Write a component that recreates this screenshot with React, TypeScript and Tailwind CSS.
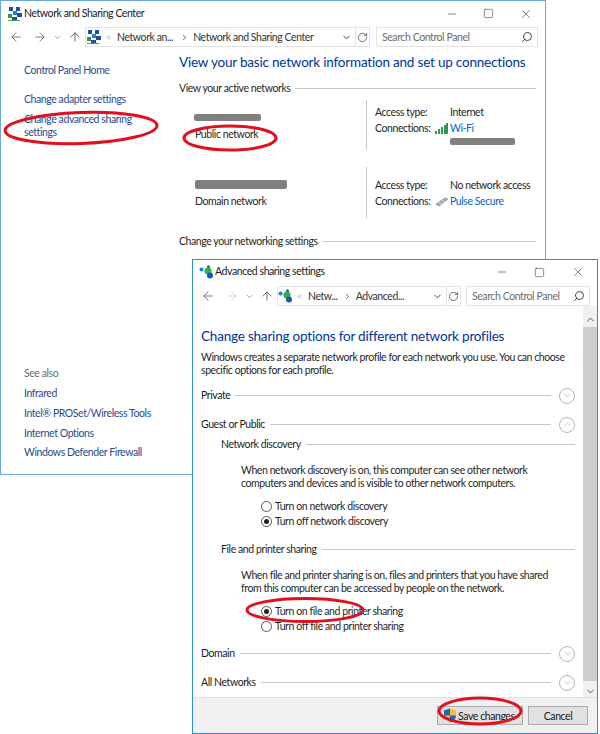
// Two overlapping Windows Control Panel dialogs with red hand-drawn ellipses on top.
import type { ReactNode } from 'react';
import { ArrowLeft, ArrowRight, ArrowUp, ChevronDown, ChevronUp, ChevronRight, ChevronsLeft, RotateCw, Search, Minus, Square, X } from 'lucide-react';

function NetIcon() {
  return (
    <svg width="16" height="16" viewBox="0 0 16 16" className="shrink-0">
      <rect x="2" y="1" width="4" height="4" fill="#1c4fa8" />
      <rect x="9" y="1" width="4" height="4" fill="#1c4fa8" />
      <rect x="6" y="5" width="4" height="4" fill="#2e7bd0" />
      <rect x="1" y="8" width="4" height="4" fill="#2a9a3c" />
      <rect x="10" y="7" width="5" height="4" fill="#1c4fa8" />
      <rect x="5" y="11" width="5" height="4" fill="#1c4fa8" />
      <rect x="1" y="14" width="12" height="1" fill="#46b04f" />
    </svg>
  );
}

function SharingIcon() {
  return (
    <svg width="15" height="14" viewBox="0 0 15 14" className="shrink-0">
      <circle cx="2.5" cy="4.5" r="2" fill="#1f7fd0" />
      <circle cx="9.5" cy="1.8" r="1.6" fill="#1f63b8" />
      <circle cx="9" cy="6" r="3.6" fill="#2fb24a" />
      <circle cx="11" cy="10.5" r="3" fill="#1559b0" />
    </svg>
  );
}

function WifiBars() {
  return (
    <svg width="13" height="11" viewBox="0 0 13 11" className="shrink-0">
      <rect x="0" y="8" width="2" height="3" fill="#2f9a52" />
      <rect x="3" y="6" width="2" height="5" fill="#2f9a52" />
      <rect x="6" y="4" width="2" height="7" fill="#2f9a52" />
      <rect x="9" y="2" width="2" height="9" fill="#2f9a52" />
      <rect x="11" y="0" width="2" height="11" fill="#2f9a52" />
    </svg>
  );
}

function PipeIcon() {
  return (
    <svg width="14" height="10" viewBox="0 0 14 10" className="shrink-0">
      <path d="M1 7 L10 1 L13 2 L4 9 Z" fill="#9fb1bf" stroke="#7f8f9c" strokeWidth="0.7" />
      <path d="M4 5 L6 7 M7 3 L9 5" stroke="#e8eef2" strokeWidth="0.8" />
    </svg>
  );
}

function Shield() {
  return (
    <svg width="14" height="15" viewBox="0 0 13 15" className="shrink-0">
      <path d="M6.5 0.5 L12.5 2.5 V7.5 C12.5 11 9.5 13.5 6.5 14.5 C3.5 13.5 0.5 11 0.5 7.5 V2.5 Z" fill="#f4c32c" />
      <path d="M6.5 0.5 V7.5 H0.5 V2.5 Z" fill="#1f63c0" />
      <path d="M6.5 7.5 H12.5 C12.5 11 9.5 13.5 6.5 14.5 Z" fill="#1f63c0" />
    </svg>
  );
}

function Blob({ w, h, className = '' }: { w: string; h: string; className?: string }) {
  return <div className={`${w} ${h} ${className} rounded-[2px] bg-[#808080]`} />;
}

function Caption({ title, icon, maxGap, pad }: { title: string; icon: ReactNode; maxGap: string; pad: string }) {
  return (
    <div className={`flex h-[26px] shrink-0 items-center ${pad} pl-[6px] text-[#1a1a1a]`}>
      {icon}
      <span className="ml-[1px]">{title}</span>
      <div className={`ml-auto flex items-center ${maxGap} pr-[12px] text-[#333]`}>
        <Minus size={12} strokeWidth={1.2} />
        <Square size={11} strokeWidth={1.2} />
        <X size={14} strokeWidth={1} />
      </div>
    </div>
  );
}

function SearchBox() {
  return (
    <div className="flex h-[20px] flex-1 items-center justify-between border border-[#e3e3e3] pl-[5px] pr-[4px] pt-[2px] text-[#6d6d6d]">
      <span>Search Control Panel</span>
      <Search size={12} strokeWidth={2} className="-translate-y-px -scale-x-100 text-[#444]" />
    </div>
  );
}

function SectionLine({ label }: { label: string }) {
  return (
    <div className="flex items-center gap-[5px]">
      <span>{label}</span>
      <div className="h-px flex-1 bg-[#c8c8c8]" />
    </div>
  );
}

function Profile({ label, open = false }: { label: string; open?: boolean }) {
  return (
    <div className="flex h-[17px] items-center gap-[5px]">
      <span className="text-[#1a1a1a]">{label}</span>
      <div className="h-px flex-1 bg-[#c8c8c8]" />
      <div className="ml-[3px] flex h-[16px] w-[16px] items-center justify-center rounded-full border border-[#b5b5b5] text-[#8a8a8a]">
        {open ? <ChevronUp size={11} strokeWidth={1} /> : <ChevronDown size={11} strokeWidth={1} />}
      </div>
    </div>
  );
}

function Radio({ label, on = false }: { label: string; on?: boolean }) {
  return (
    <div className="flex h-[15px] items-center gap-[3px]">
      <div className="flex h-[11px] w-[11px] items-center justify-center rounded-full border border-[#555] bg-white">
        {on && <div className="h-[5px] w-[5px] rounded-full bg-[#222]" />}
      </div>
      <span>{label}</span>
    </div>
  );
}

function SideLink({ children, className = '' }: { children: ReactNode; className?: string }) {
  return <div className={`leading-[13px] text-[#2a4a8c] ${className}`}>{children}</div>;
}

function Networks() {
  return (
    <div className="absolute left-0 top-0 flex h-[475px] w-[546px] flex-col overflow-hidden border border-[#6ba8dc] bg-white">
      <Caption title="Network and Sharing Center" maxGap="gap-[25px]" pad="pb-[1px]" icon={<NetIcon />} />

      {/* Navigation row */}
      <div className="flex h-[20px] shrink-0 items-center pr-[7px] text-[#555]">
        <ArrowLeft size={14} strokeWidth={1.3} className="ml-[8px]" />
        <ArrowRight size={14} strokeWidth={1.3} className="ml-[10px]" />
        <ChevronDown size={9} strokeWidth={1.5} className="ml-[6px]" />
        <ArrowUp size={14} strokeWidth={1.5} className="ml-[6px]" />
        <div className="ml-[3px] flex h-[20px] w-[285px] items-center border border-[#e3e3e3] text-[#333]">
          <NetIcon />
          <ChevronsLeft size={7} className="ml-[3px] text-[#888]" />
          <span className="ml-[5px] pt-[2px]">Network an...</span>
          <ChevronRight size={9} strokeWidth={2} className="ml-[7px]" />
          <span className="ml-[4px] pt-[2px]">Network and Sharing Center</span>
          <ChevronDown size={11} strokeWidth={2} className="ml-auto mr-[3px]" />
          <div className="flex h-full w-[14px] items-center justify-center border-l border-[#e3e3e3]">
            <RotateCw size={11} strokeWidth={1.5} />
          </div>
        </div>
        <div className="ml-[6px] flex flex-1">
          <SearchBox />
        </div>
      </div>

      <div className="flex min-h-0 flex-1">
        {/* Task pane */}
        <div className="flex w-[178px] shrink-0 flex-col pl-[23px]">
          <SideLink className="mt-[17px]">Control Panel Home</SideLink>
          <SideLink className="mt-[16px]">Change adapter settings</SideLink>
          <SideLink className="mt-[7px]">
            Change advanced sharing
            <br />
            settings
          </SideLink>
          <div className="mt-[228px] leading-[13px] text-[#6d6d6d]">See also</div>
          <div className="mt-[7px] flex flex-col gap-[7px]">
            <SideLink>Infrared</SideLink>
            <SideLink>Intel® PROSet/Wireless Tools</SideLink>
            <SideLink>Internet Options</SideLink>
            <SideLink className="-mt-px">Windows Defender Firewall</SideLink>
          </div>
        </div>

        {/* Main pane */}
        <div className="flex min-w-0 flex-1 flex-col pr-[9px]">
          <h1 className="mt-[5px] text-[13.5px] font-normal leading-[20px] tracking-[-0.2px] text-[#003399]">
            View your basic network information and set up connections
          </h1>
          <div className="mt-[10px] leading-[13px]">
            <SectionLine label="View your active networks" />
          </div>

          <div className="mt-[5px] flex h-[50px]">
            <div className="w-[187px] shrink-0 pl-[15px]">
              <Blob w="w-[67px]" h="h-[7px]" className="mt-[14px]" />
              <div className="ml-[1px] mt-[7px] leading-[13px]">Public network</div>
            </div>
            <div className="w-px shrink-0 bg-[#c8c8c8]" />
            <div className="pl-[8px] pt-[6px]">
              <div className="flex h-[13px] items-center">
                <span className="w-[75px]">Access type:</span>
                <span>Internet</span>
              </div>
              <div className="mt-[3px] flex h-[13px] items-center">
                <span className="w-[60px]">Connections:</span>
                <WifiBars />
                <span className="ml-[2px] text-[#0066cc]">Wi-Fi</span>
              </div>
              <Blob w="w-[65px]" h="h-[7px]" className="ml-[75px] mt-[3px]" />
            </div>
          </div>

          <div className="mt-[17px] flex h-[51px]">
            <div className="w-[187px] shrink-0 pl-[16px]">
              <Blob w="w-[92px]" h="h-[9px]" className="mt-[13px]" />
              <div className="mt-[6px] leading-[13px]">Domain network</div>
            </div>
            <div className="w-px shrink-0 bg-[#c8c8c8]" />
            <div className="pl-[8px] pt-[12px]">
              <div className="flex h-[13px] items-center">
                <span className="w-[75px]">Access type:</span>
                <span>No network access</span>
              </div>
              <div className="mt-[3px] flex h-[13px] items-center">
                <span className="w-[60px]">Connections:</span>
                <PipeIcon />
                <span className="ml-[1px] text-[#0066cc]">Pulse Secure</span>
              </div>
            </div>
          </div>

          <div className="mt-[17px] leading-[13px]">
            <SectionLine label="Change your networking settings" />
          </div>
        </div>
      </div>
    </div>
  );
}

function AdvancedSharing() {
  return (
    <div className="absolute left-[192px] top-[259px] flex h-[475px] w-[406px] flex-col overflow-hidden border border-[#2d8fd9] bg-white">
      <Caption title="Advanced sharing settings" maxGap="gap-[26px]" pad="pb-[2px]" icon={<SharingIcon />} />

      {/* Navigation row */}
      <div className="flex h-[20px] shrink-0 items-center pr-[7px] text-[#555]">
        <ArrowLeft size={14} strokeWidth={1.3} className="ml-[8px]" />
        <ArrowRight size={14} strokeWidth={1.3} className="ml-[10px] text-[#c4c4c4]" />
        <ChevronDown size={9} strokeWidth={1.5} className="ml-[6px]" />
        <ArrowUp size={14} strokeWidth={1.5} className="ml-[6px]" />
        <div className="ml-[3px] flex h-[20px] w-[184px] items-center border border-[#e3e3e3] text-[#333]">
          <SharingIcon />
          <ChevronsLeft size={7} className="ml-[3px] text-[#888]" />
          <span className="ml-[5px] pt-[2px]">Netw...</span>
          <ChevronRight size={9} strokeWidth={2} className="ml-[5px]" />
          <span className="ml-[4px] pt-[2px]">Advanced...</span>
          <ChevronDown size={11} strokeWidth={2} className="ml-auto mr-[3px]" />
          <div className="flex h-full w-[14px] items-center justify-center border-l border-[#e3e3e3]">
            <RotateCw size={11} strokeWidth={1.5} />
          </div>
        </div>
        <div className="ml-[5px] flex flex-1">
          <SearchBox />
        </div>
      </div>

      <div className="flex min-h-0 flex-1">
        <div className="flex min-w-0 flex-1 flex-col pl-[8px] pr-[8px]">
          <h2 className="mt-[20px] text-[13.5px] font-normal leading-[20px] tracking-[-0.2px] text-[#003399]">
            Change sharing options for different network profiles
          </h2>
          <p className="mt-[5px] leading-[13px]">
            Windows creates a separate network profile for each network you use. You can choose
            <br />
            specific options for each profile.
          </p>
          <div className="mt-[10px]">
            <Profile label="Private" />
          </div>
          <div className="mt-[12px]">
            <Profile label="Guest or Public" open />
          </div>

          <div className="ml-[20px] mt-[5px] leading-[13px]">
            <SectionLine label="Network discovery" />
            <p className="ml-[20px] mt-[13px]">
              When network discovery is on, this computer can see other network
              <br />
              computers and devices and is visible to other network computers.
            </p>
            <div className="ml-[40px] mt-[9px]">
              <Radio label="Turn on network discovery" />
              <Radio label="Turn off network discovery" on />
            </div>
            <div className="mt-[14px]">
              <SectionLine label="File and printer sharing" />
            </div>
            <p className="ml-[20px] mt-[13px]">
              When file and printer sharing is on, files and printers that you have shared
              <br />
              from this computer can be accessed by people on the network.
            </p>
            <div className="ml-[40px] mt-[9px]">
              <Radio label="Turn on file and printer sharing" on />
              <Radio label="Turn off file and printer sharing" />
            </div>
          </div>

          <div className="mt-[11px]">
            <Profile label="Domain" />
          </div>
          <div className="mt-[12px]">
            <Profile label="All Networks" />
          </div>
        </div>

        {/* Scrollbar */}
        <div className="flex w-[14px] shrink-0 flex-col items-center bg-[#f0f0f0] pt-[8px] text-[#444]">
          <ChevronUp size={11} strokeWidth={2} className="shrink-0" />
          <div className="mt-[2px] h-[356px] w-full bg-[#cdcdcd]" />
          <ChevronDown size={11} strokeWidth={2} className="mt-[5px] shrink-0" />
        </div>
      </div>

      {/* Button strip */}
      <div className="flex h-[36px] shrink-0 items-center justify-end gap-[5px] border-t border-[#dfdfdf] bg-[#f0f0f0] pr-[9px]">
        <div className="flex h-[19px] w-[86px] items-center gap-[1px] border border-[#adadad] bg-[#e1e1e1] pl-[5px] text-[#1a1a1a]">
          <Shield />
          <span className="pt-[2px]">Save changes</span>
        </div>
        <div className="flex h-[19px] w-[60px] items-center justify-center border border-[#adadad] bg-[#e1e1e1] pt-[2px] text-[#1a1a1a]">
          Cancel
        </div>
      </div>
    </div>
  );
}

export default function App() {
  return (
    <div className="relative h-[734px] w-[600px] overflow-hidden whitespace-nowrap bg-white text-[10.5px] tracking-[-0.42px] text-[#1f1f1f] [font-family:Lato,sans-serif]">
      <Networks />
      <AdvancedSharing />

      {/* Red annotation ellipses */}
      <svg width="600" height="734" className="pointer-events-none absolute left-0 top-0" fill="none" stroke="#e0101c" strokeWidth="3">
        <ellipse cx="81" cy="128" rx="76" ry="15.5" transform="rotate(-2 81 128)" />
        <ellipse cx="230" cy="138" rx="46" ry="12" />
        <ellipse cx="305" cy="610" rx="58" ry="11.5" />
        <ellipse cx="480" cy="711" rx="41" ry="13" />
      </svg>
    </div>
  );
}
